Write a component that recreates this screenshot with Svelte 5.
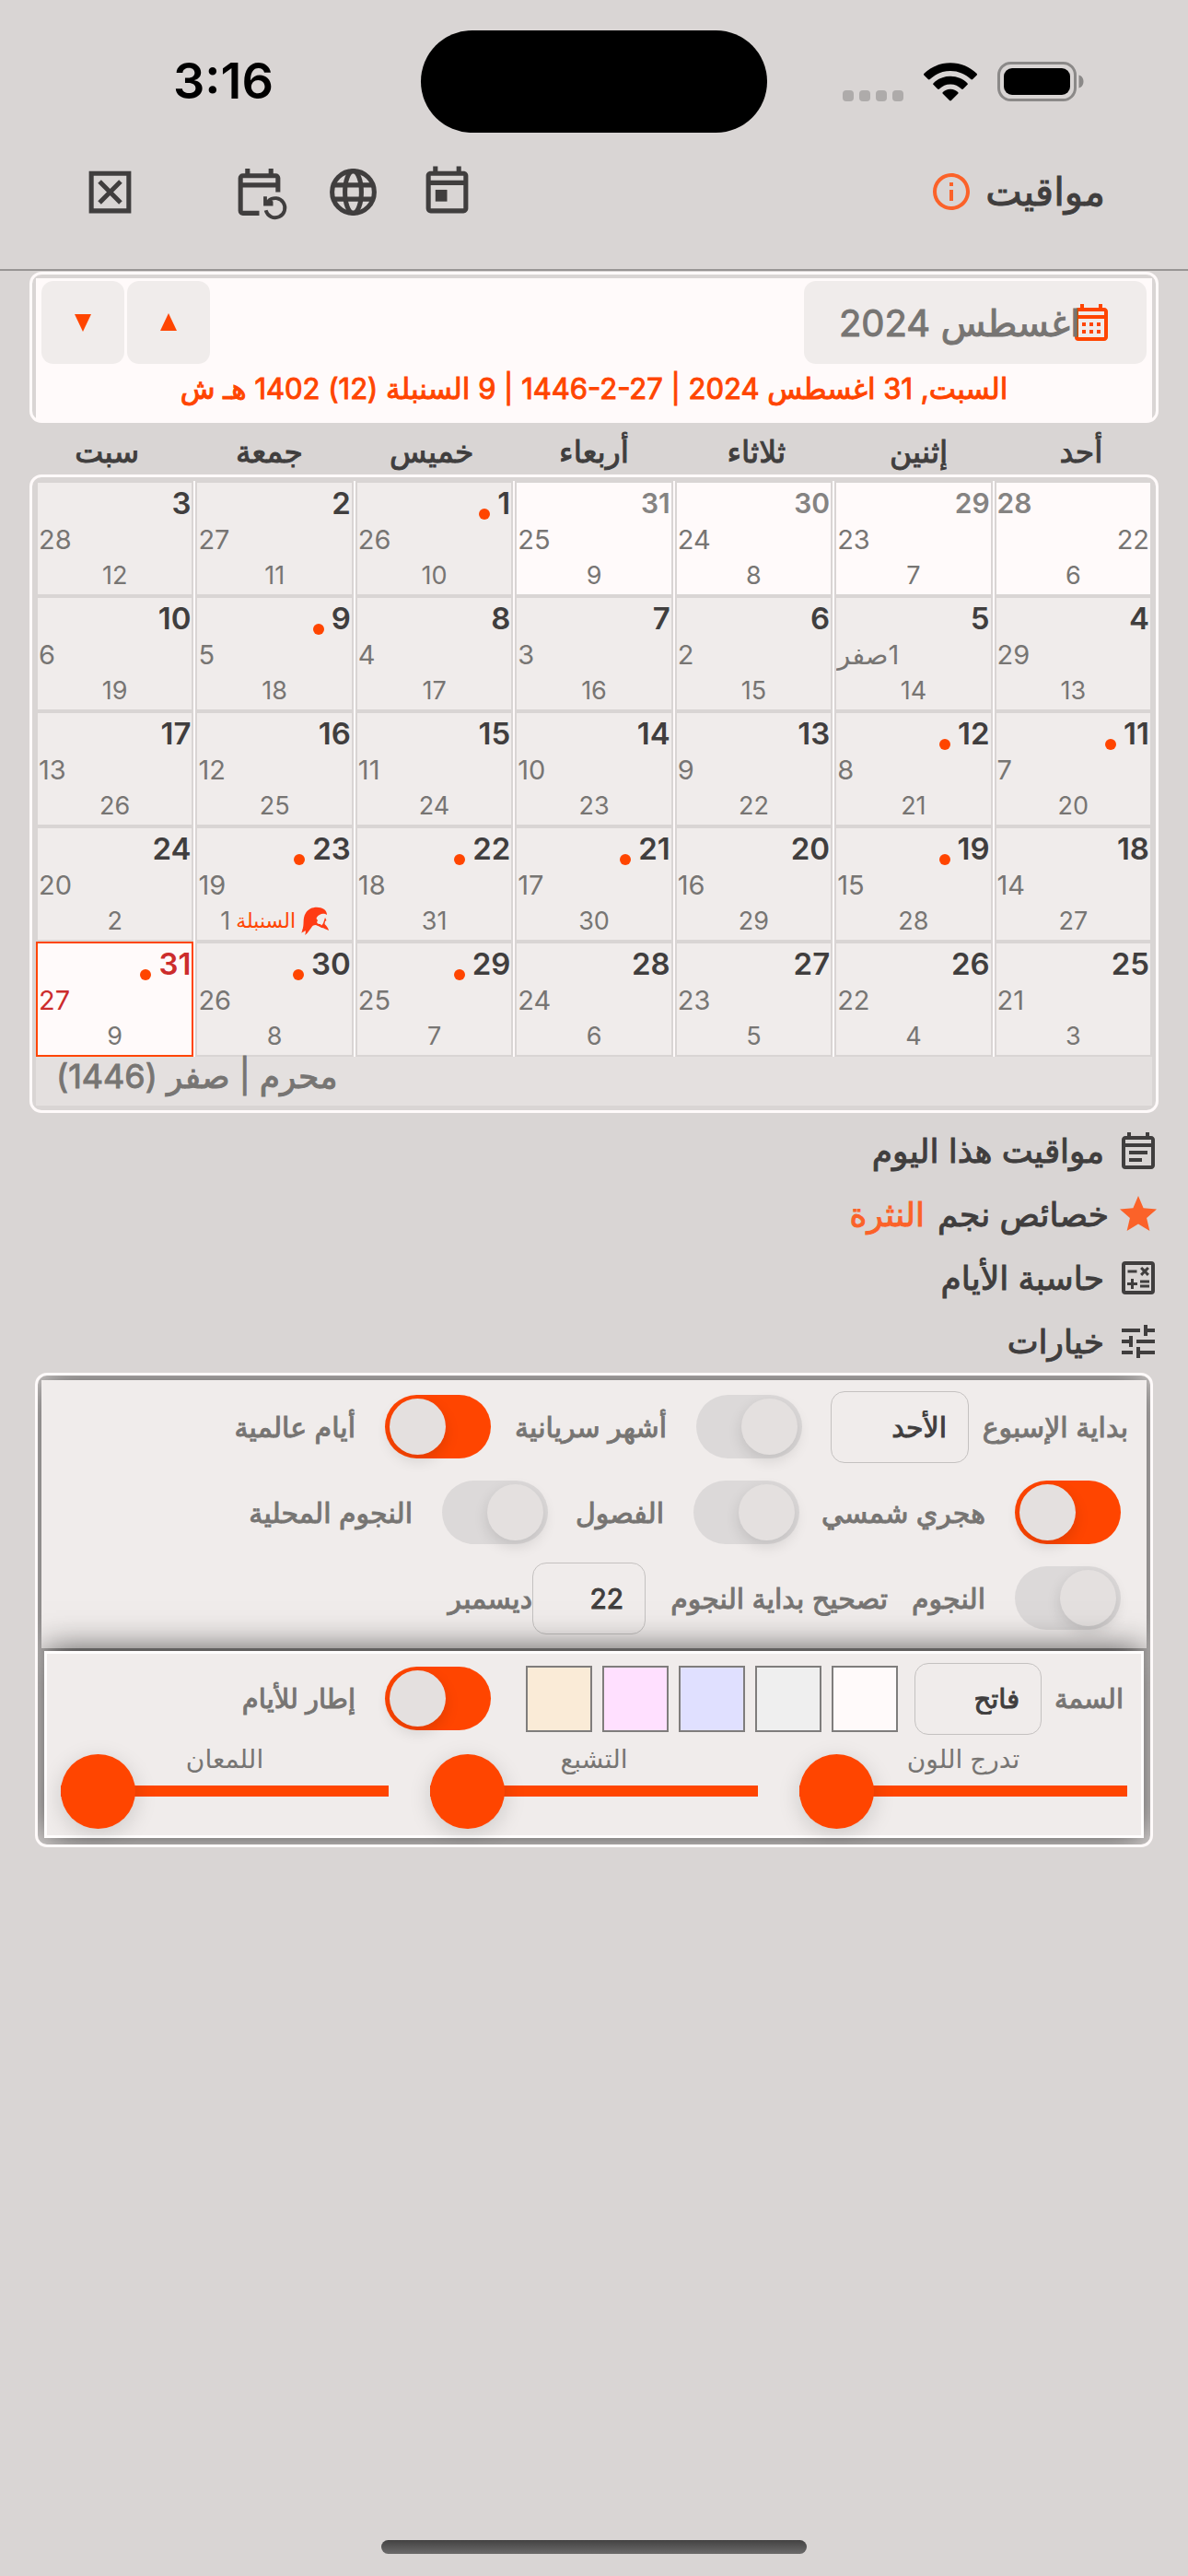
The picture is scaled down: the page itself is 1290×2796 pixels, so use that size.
<script lang="ts">
  type Day = { g: number; h: string; s: number; dim?: boolean; dot?: boolean; sign?: string; selected?: boolean; flip?: boolean };

  const weekdays = ['أحد', 'إثنين', 'ثلاثاء', 'أربعاء', 'خميس', 'جمعة', 'سبت'];
  const days: Day[] = [
    { g: 28, h: '22', s: 6, dim: true, flip: true },
    { g: 29, h: '23', s: 7, dim: true },
    { g: 30, h: '24', s: 8, dim: true },
    { g: 31, h: '25', s: 9, dim: true },
    { g: 1, h: '26', s: 10, dot: true },
    { g: 2, h: '27', s: 11 },
    { g: 3, h: '28', s: 12 },
    { g: 4, h: '29', s: 13 },
    { g: 5, h: '1صفر', s: 14 },
    { g: 6, h: '2', s: 15 },
    { g: 7, h: '3', s: 16 },
    { g: 8, h: '4', s: 17 },
    { g: 9, h: '5', s: 18, dot: true },
    { g: 10, h: '6', s: 19 },
    { g: 11, h: '7', s: 20, dot: true },
    { g: 12, h: '8', s: 21, dot: true },
    { g: 13, h: '9', s: 22 },
    { g: 14, h: '10', s: 23 },
    { g: 15, h: '11', s: 24 },
    { g: 16, h: '12', s: 25 },
    { g: 17, h: '13', s: 26 },
    { g: 18, h: '14', s: 27 },
    { g: 19, h: '15', s: 28, dot: true },
    { g: 20, h: '16', s: 29 },
    { g: 21, h: '17', s: 30, dot: true },
    { g: 22, h: '18', s: 31, dot: true },
    { g: 23, h: '19', s: 1, dot: true, sign: 'السنبلة' },
    { g: 24, h: '20', s: 2 },
    { g: 25, h: '21', s: 3 },
    { g: 26, h: '22', s: 4 },
    { g: 27, h: '23', s: 5 },
    { g: 28, h: '24', s: 6 },
    { g: 29, h: '25', s: 7, dot: true },
    { g: 30, h: '26', s: 8, dot: true },
    { g: 31, h: '27', s: 9, dot: true, selected: true },
  ];
  const swatches = ['#fffafa', '#efefef', '#e0e0ff', '#ffe0ff', '#faebd7'];
  const sliders = ['تدرج اللون', 'التشبع', 'اللمعان'];

  const calendarFrame =
    'M19 4h-1V2h-2v2H8V2H6v2H5c-1.11 0-2 .9-2 2v14a2 2 0 0 0 2 2h14c1.1 0 2-.9 2-2V6c0-1.1-.9-2-2-2zm0 16H5V10h14v10zm0-12H5V6h14v2z';
</script>

<div class="page" dir="rtl">
  <div class="status" dir="ltr">
    <span class="time">3:16</span>
    <span class="island"></span>
    <span class="signals">
      <span class="cell-dots"><i></i><i></i><i></i><i></i></span>
      <svg class="wifi" viewBox="0 0 60 43" aria-label="Wi-Fi">
        <path d="M30 0C41.500 0 52 4.500 59.500 12q1 1 0 2l-4.500 4.500q-1 1-2 0C47 12.500 39 9 30 9S13 12.500 7 18.500q-1 1-2 0L.5 14q-1-1 0-2C8 4.500 18.500 0 30 0z" />
        <path d="M30 15c7.500 0 14.300 3 19 7.700q1 1 0 2l-4.600 4.600q-1 1-2 0C39 26 35 24 30 24s-9 2-12.400 5.300q-1 1-2 0L11 24.700q-1-1 0-2C15.700 18 22.500 15 30 15z" />
        <path d="M30 29.500c3.500 0 6.500 1.400 8.500 3.300q1 1 0 2L31 42.300q-1 1-2 0l-7.500-7.500q-1-1 0-2c2-1.900 5-3.300 8.500-3.300z" />
      </svg>
      <svg class="battery" viewBox="0 0 94 43" aria-label="Battery">
        <rect x="1.500" y="1.500" width="83" height="40" rx="13" fill="none" stroke="#8b8988" stroke-width="3" />
        <rect x="7" y="7" width="72" height="29" rx="9" />
        <path d="M88.500 14.500c3.500 1 5 4 5 7s-1.500 6-5 7z" fill="#8b8988" />
      </svg>
    </span>
  </div>

  <header class="topbar">
    <h1>مواقيت</h1>
    <button class="info" aria-label="معلومات">
      <svg viewBox="0 0 24 24"><path d="M11 7h2v2h-2zm0 4h2v6h-2zm1-9C6.480 2 2 6.480 2 12s4.480 10 10 10 10-4.480 10-10S17.520 2 12 2zm0 18c-4.410 0-8-3.590-8-8s3.590-8 8-8 8 3.590 8 8-3.590 8-8 8z" /></svg>
    </button>
    <nav class="tools">
      <button aria-label="اليوم">
        <svg viewBox="0 1 24 24"><path d={calendarFrame} /><path d="M7 12h5v5H7z" /></svg>
      </button>
      <button aria-label="اللغة">
        <svg viewBox="0 0 24 24" fill="none" stroke="currentColor" stroke-width="2"><circle cx="12" cy="12" r="9" /><ellipse cx="12" cy="12" rx="3.500" ry="9" /><path d="M3.600 9h16.800M3.600 15h16.800" /></svg>
      </button>
      <button aria-label="تحديث التقويم">
        <svg viewBox="0 0 24 24"><path d="M12 22H5a2 2 0 0 1-2-2V6a2 2 0 0 1 2-2h1V2h2v2h8V2h2v2h1a2 2 0 0 1 2 2v6h-2v-2H5v10h7zM5 8h14V6H5z" /><path d="M14.800 19.800A4.150 4.150 0 1 0 16 15.700" fill="none" stroke="currentColor" stroke-width="1.500" /><path d="M13.800 13.900h1.500v1.500l1.200-.8 1.400 1.400v1.900h-4.100z" /></svg>
      </button>
      <button class="close" aria-label="إغلاق">
        <svg viewBox="0 0 24 24" fill="none" stroke="currentColor" stroke-width="2"><path d="M4 4h16v16H4zM7.500 7.500l9 9M16.500 7.500l-9 9" /></svg>
      </button>
    </nav>
  </header>

  <main>
    <section class="card heading">
      <div class="heading-body">
        <div class="month-row">
          <button class="month">
            <svg viewBox="0 0 24 24"><path d={calendarFrame} /><path d="M7 12h2v2H7zm4 0h2v2h-2zm4 0h2v2h-2zM7 16h2v2H7zm4 0h2v2h-2zm4 0h2v2h-2z" /></svg>
            <span>اغسطس 2024</span>
          </button>
          <div class="steps">
            <button aria-label="السابق"><svg viewBox="0 0 20 20"><path d="M10 0l9 19H1z" /></svg></button>
            <button aria-label="التالي"><svg viewBox="0 0 20 20"><path d="M10 20L1 1h18z" /></svg></button>
          </div>
        </div>
        <p class="today">السبت, 31 اغسطس 2024 | <bdi dir="ltr">1446-2-27</bdi> | 9 السنبلة (12) 1402 هـ ش</p>
      </div>
    </section>

    <div class="weekdays">
      {#each weekdays as w}<span>{w}</span>{/each}
    </div>

    <section class="card calendar">
      <div class="days">
        {#each days as d}
          <button class="day" class:dim={d.dim} class:selected={d.selected} class:flip={d.flip}>
            <span class="g">{d.g}{#if d.dot}<i class="dot"></i>{/if}</span>
            <span class="h">{d.h}</span>
            <span class="s">
              {#if d.sign}
                <svg viewBox="0 0 30 31"><path d="M1 26C4 20 1 13 5 7 9 0 19-1 25 3c2 1.500 3 4 3 6-2-1-5-2-8 0-2 1-3 2-3.500 4l1.500 2-1 2c1 2 2 2 4 2l1 2c-2 1-4 0-6-1-3 0-4 1-5 3l-3 4c-1 2-3 3-4 4 1-2 1-4 .5-5-1 1-3 2-4.500 2.500C1 27 1.500 27 1 26z" /><path d="M26 12l1.500 3-1.500 1-.5 3c2 2 4 4 4.500 7-3-1-5-3-8-3l-3-2c3 0 4-1 5-3z" /></svg>
                <em>{d.sign}</em>
              {/if}
              <b>{d.s}</b>
            </span>
          </button>
        {/each}
      </div>
      <p class="hijri">محرم | صفر (1446)</p>
    </section>

    <nav class="links">
      <a href="#today"><svg viewBox="0 0 24 24"><path d={calendarFrame} /><path d="M7 12h10v2H7zm0 4h7v2H7z" /></svg><span>مواقيت هذا اليوم</span></a>
      <a href="#star" class="star"><svg viewBox="0 0 24 24"><path d="M12 17.270L18.180 21l-1.640-7.030L22 9.240l-7.190-.61L12 2 9.190 8.630 2 9.240l5.460 4.730L5.820 21z" /></svg><span>خصائص نجم <strong>النثرة</strong></span></a>
      <a href="#calculator"><svg viewBox="0 0 24 24"><path d="M19 3H5a2 2 0 0 0-2 2v14a2 2 0 0 0 2 2h14a2 2 0 0 0 2-2V5a2 2 0 0 0-2-2zm0 16H5V5h14v14z" /><path d="M6.250 7.720h5v1.500h-5zM13 15.750h5v1.500h-5zM13 13.250h5v1.500h-5zM8 18h1.500v-2h2v-1.500h-2v-2H8v2H6V16h2zM14.090 10.950l1.410-1.410 1.410 1.410 1.060-1.060-1.410-1.420 1.410-1.410L16.910 6 15.500 7.410 14.090 6l-1.060 1.060 1.410 1.410-1.410 1.420z" /></svg><span>حاسبة الأيام</span></a>
      <a href="#options"><svg viewBox="0 0 24 24"><path d="M3 17v2h6v-2H3zM3 5v2h10V5H3zm10 16v-2h8v-2h-8v-2h-2v6h2zM7 9v2H3v2h4v2h2V9H7zm14 4v-2H11v2h10zm-6-4h2V7h4V5h-4V3h-2v6z" /></svg><span>خيارات</span></a>
    </nav>

    <section class="card options">
      <div class="panel general">
        <div class="row">
          <label class="field"><span class="w160">بداية الإسبوع</span><select class="wide"><option>الأحد</option></select></label>
          <label class="switch first"><input type="checkbox" /><span class="w160">أشهر سريانية</span></label>
          <label class="switch"><input type="checkbox" checked /><span>أيام عالمية</span></label>
        </div>
        <div class="row">
          <label class="switch"><input type="checkbox" checked /><span class="w170">هجري شمسي</span></label>
          <label class="switch"><input type="checkbox" /><span class="w94">الفصول</span></label>
          <label class="switch"><input type="checkbox" /><span>النجوم المحلية</span></label>
        </div>
        <div class="row">
          <label class="switch"><input type="checkbox" /><span class="w80">النجوم</span></label>
          <label class="field shift"><span class="w250">تصحيح بداية النجوم</span><input class="narrow" type="text" value="22" /></label>
          <span class="unit">ديسمبر</span>
        </div>
      </div>
      <div class="panel theme">
        <div class="row">
          <label class="field"><span class="w76">السمة</span><select class="medium"><option>فاتح</option></select></label>
          <div class="swatches">
            {#each swatches as c}<button aria-label={c} style="background:{c}"></button>{/each}
          </div>
          <label class="switch"><input type="checkbox" checked /><span>إطار للأيام</span></label>
        </div>
        <div class="sliders">
          {#each sliders as s}
            <label><span>{s}</span><input type="range" min="0" max="100" value="100" /></label>
          {/each}
        </div>
      </div>
    </section>
  </main>

  <div class="home"><span></span></div>
</div>

<style>
  :global(body) { margin: 0; background: #d9d5d4; }
  .page {
    --bg: #d9d5d4;
    --snow: #fffafa;
    --cell: #f0eceb;
    --accent: #ff4500;
    --ink: #403e3e;
    --muted: #777573;
    box-sizing: border-box;
    min-height: 100vh;
    display: flex;
    flex-direction: column;
    background: var(--bg);
    color: var(--ink);
    font-family: Inter, 'DejaVu Sans', sans-serif;
    font-size: 30px;
  }
  .page * { box-sizing: border-box; }
  button { font: inherit; color: inherit; border: 0; padding: 0; margin: 0; background: none; }
  svg { display: block; fill: currentColor; overflow: visible; }
  svg[fill='none'] { fill: none; }
  p, h1 { margin: 0; }
  h1, .month, .today, .weekdays, .hijri, .links, .row { font-weight: 400; -webkit-text-stroke: 1px currentColor; }

  .status {
    height: 170px;
    padding: 6px 113px 0;
    display: grid;
    grid-template-columns: 1fr 376px 1fr;
    align-items: center;
    color: #000;
  }
  .time { padding-left: 75px; font-size: 54px; line-height: 60px; font-weight: 600; }
  .island { height: 111px; border-radius: 56px; background: #000; }
  .signals { display: flex; justify-content: flex-end; align-items: flex-end; gap: 22px; }
  .cell-dots { display: flex; gap: 6px; }
  .cell-dots i { width: 12px; height: 12px; border-radius: 4px; background: #aeabaa; }
  .wifi { width: 58px; height: 42px; }
  .battery { width: 94px; height: 43px; }

  .topbar {
    height: 124px;
    padding: 0 90px 46px 89px;
    display: flex;
    align-items: center;
    border-bottom: 2px solid #989594;
  }
  .topbar h1 { font-size: 42px; line-height: 60px; }
  .info { margin-right: 13px; color: #fb6229; }
  .info svg { width: 48px; height: 48px; }
  .tools { margin-right: auto; display: flex; align-items: center; gap: 41px; }
  .tools svg { width: 61px; height: 61px; }
  .close { margin-right: 60px; }

  main { padding: 1px 32px 0; }
  .card { border: 3px solid var(--snow); border-radius: 13px; }
  .heading { padding: 4px 4px 0; }
  .heading-body { background: var(--snow); padding: 3px 6px 0; height: 154px; }
  .month-row { display: flex; justify-content: space-between; }
  .month {
    width: 372px;
    height: 90px;
    padding: 0 36px;
    display: flex;
    align-items: center;
    border-radius: 13px;
    background: var(--cell);
    color: var(--muted);
    font-size: 40px;
    white-space: nowrap;
  }
  .month svg { width: 48px; height: 48px; flex: none; color: var(--accent); }
  .month span { margin-right: -12px; }
  .steps { display: flex; gap: 3px; color: var(--accent); }
  .steps button { width: 90px; height: 90px; display: grid; place-items: center; border-radius: 13px; background: var(--cell); }
  .steps svg { width: 20px; height: 20px; }
  .today { color: var(--accent); text-align: center; font-size: 31px; line-height: 54px; white-space: nowrap; }

  .weekdays { display: grid; grid-template-columns: repeat(7, 1fr); margin: 0 -4px; height: 56px; line-height: 63px; text-align: center; font-size: 33px; }
  .calendar { padding: 4px 4px 5px; }
  .days { display: grid; grid-template-columns: repeat(7, 1fr); column-gap: 2px; background: var(--snow); }
  .day {
    height: 125px;
    display: flex;
    flex-direction: column;
    padding: 2px 1px;
    border: 2px solid var(--bg);
    background: var(--cell);
    color: var(--muted);
    line-height: 40px;
    min-width: 0;
    overflow: hidden;
  }
  .g { display: flex; align-items: center; gap: 8px; height: 40px; font-size: 33px; font-weight: 600; color: var(--ink); }
  .dot { width: 12px; height: 12px; margin-top: 23px; border-radius: 50%; background: var(--accent); }
  .h { align-self: flex-end; height: 40px; font-size: 29px; white-space: nowrap; }
  .s { display: flex; justify-content: center; align-items: center; gap: 6px; height: 37px; font-size: 27px; line-height: 37px; }
  .s b { font-weight: 400; }
  .s em { font-size: 22px; font-style: normal; color: var(--accent); }
  .s svg { width: 30px; height: 31px; color: #ff3b14; }
  .dim { background: var(--snow); }
  .dim .g { color: #858382; font-size: 30px; }
  .flip .g { align-self: flex-end; }
  .flip .h { align-self: flex-start; }
  .selected { background: var(--snow); border-color: var(--accent); }
  .selected .g, .selected .h { color: #cc2c2c; }
  .hijri { height: 53px; padding: 0 22px; background: #e4e0df; color: var(--muted); font-size: 36px; line-height: 42px; text-align: left; }

  .links { margin-right: -2px; padding-top: 6px; }
  .links a { height: 69px; display: flex; align-items: center; gap: 13px; color: var(--ink); font-size: 36px; line-height: 60px; text-decoration: none; }
  .links svg { width: 48px; height: 48px; }
  .links .star { gap: 8px; }
  .star svg, .star strong { color: #fb6229; font-weight: 400; }
  .star strong { margin-right: 4px; }

  .options { margin: 0 6px; overflow: hidden; padding: 5px 4px 7px; }
  .panel { background: var(--cell); box-shadow: 0 0 36px rgba(0, 0, 0, 0.7); color: var(--muted); }
  .general { padding: 4px 20px 8px; }
  .theme { position: relative; margin: 3px 3px 0; border: 3px solid #fffdfd; padding: 2px 15px 0; height: 203px; }
  .row { height: 93px; display: flex; align-items: center; white-space: nowrap; font-size: 30px; }
  .row span { flex: none; }
  .switch { display: flex; align-items: center; }
  .switch input {
    appearance: none;
    flex: none;
    margin: 0 8px 0 32px;
    width: 115px;
    height: 69px;
    padding: 4px 5px;
    border-radius: 35px;
    background: #dcd9d9;
    display: flex;
  }
  .switch input::before { content: ''; width: 61px; height: 61px; border-radius: 50%; background: #e4e0df; box-shadow: 0 6px 16px rgba(0, 0, 0, 0.12); }
  .switch input:checked { background: var(--accent); justify-content: flex-end; }
  .row .switch + .switch input { margin-right: 32px; }
  .row .first input, .row .first + .switch input { margin-right: 31px; }
  .row .swatches + .switch input { margin-right: 38px; }
  .field { display: flex; align-items: center; gap: 13px; }
  .shift { margin-right: 26px; }
  select, input[type='text'] {
    appearance: none;
    flex: none;
    height: 78px;
    margin: 0;
    padding: 0 23px;
    border: 1px solid #c4c1c0;
    border-radius: 15px;
    background: var(--cell);
    color: var(--ink);
    font: inherit;
    text-align: right;
    -webkit-text-stroke: 1px var(--ink);
  }
  .wide { width: 150px; }
  .medium { width: 138px; }
  .narrow { width: 123px; }
  .w76 { width: 76px; }
  .w80 { width: 80px; }
  .w94 { width: 94px; }
  .w160 { width: 160px; }
  .w170 { width: 170px; }
  .w250 { width: 250px; }
  .theme .row { padding-right: 4px; font-size: 29px; }
  .swatches { display: flex; gap: 11px; margin-right: 18px; }
  .swatches button { width: 72px; height: 72px; border: 2px solid #7f7d7c; }
  .sliders { display: flex; gap: 45px; }
  .sliders label { flex: 1; display: flex; flex-direction: column; padding-top: 6px; text-align: center; font-size: 28px; line-height: 26px; }
  .sliders input {
    appearance: none;
    width: 100%;
    height: 12px;
    margin: 16px 0 0;
    background: var(--accent);
  }
  .sliders input::-webkit-slider-thumb { appearance: none; width: 81px; height: 81px; border-radius: 50%; background: var(--accent); box-shadow: 0 6px 24px rgba(0, 0, 0, 0.15); }

  .home { margin-top: auto; padding-bottom: 24px; display: flex; justify-content: center; }
  .home span { width: 462px; height: 15px; border-radius: 8px; background: linear-gradient(#434242, #6c6b6b); }
</style>
